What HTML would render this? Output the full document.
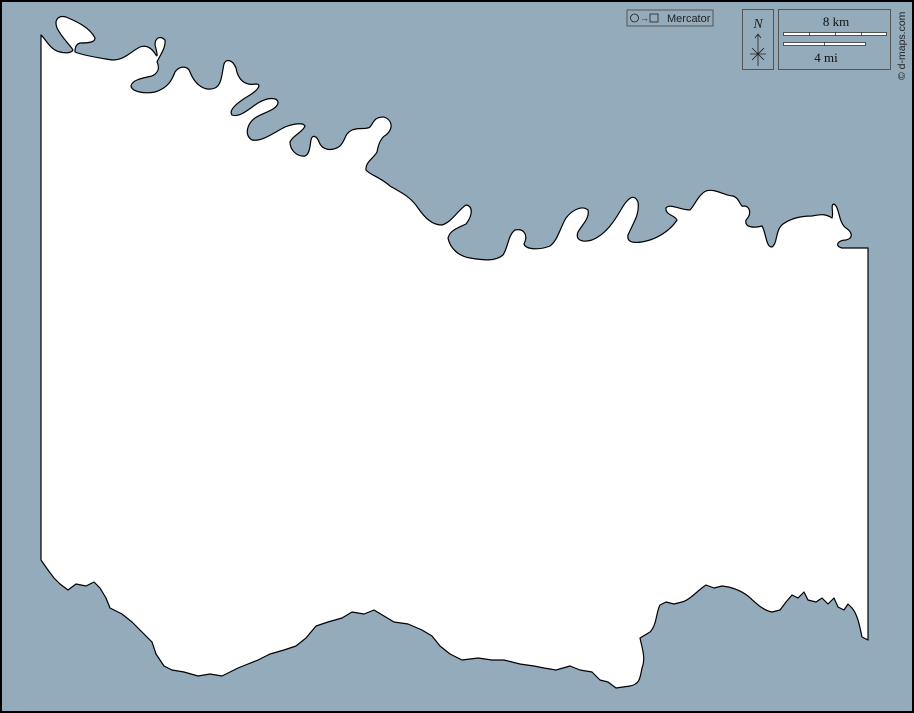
<!DOCTYPE html>
<html><head><meta charset="utf-8"><style>
html,body{margin:0;padding:0;}
body{width:914px;height:713px;overflow:hidden;background:#000;}
svg{display:block}
</style></head><body>
<svg width="914" height="713" viewBox="0 0 914 713" xmlns="http://www.w3.org/2000/svg">
<rect x="0" y="0" width="914" height="713" fill="#000"/>
<rect x="2" y="2" width="910" height="709" fill="#94abbb"/>
<path fill="#fff" stroke="#000" stroke-width="1.2" stroke-linejoin="round" d="M41,35 C45,38 50,50 60,52 C68,54 72,52 73,50 C70,45 62,38 57,28 C54,20 58,15 66,17 C78,22 90,28 95,38 C95,42 90,43 80,43 C76,44 75,48 75,52 C85,56 100,58 112,60 C125,60 130,52 140,47 C148,44 153,50 156,55 C158,58 157,52 155,45 C155,38 160,35 165,40 C166,48 160,55 157,62 C160,68 158,73 152,76 C142,78 132,80 131,86 C132,92 145,94 155,92 C168,88 172,80 175,72 C180,65 188,66 190,72 C195,85 205,92 215,88 C222,85 222,72 224,64 C226,58 233,60 236,68 C238,80 245,86 256,84 C262,84 258,90 250,95 C238,102 228,110 232,115 C240,118 250,108 258,103 C268,97 278,97 278,103 C277,110 262,113 255,118 C247,124 244,135 252,140 C262,142 275,132 285,127 C293,124 303,122 305,126 C303,132 292,136 290,142 C290,150 297,157 305,156 C310,154 310,145 311,140 C312,134 317,136 319,142 C322,150 332,152 340,146 C346,140 344,134 352,130 C360,127 366,130 370,127 C374,122 374,117 384,117 C392,120 394,128 386,135 C380,138 378,146 377,152 C374,158 365,162 366,170 C370,175 380,177 390,186 C400,192 410,196 418,208 C425,218 432,225 442,225 C452,222 458,210 466,205 C473,206 473,215 466,224 C458,228 450,230 448,238 C450,248 458,256 470,258 C482,260 495,262 503,255 C508,248 508,235 515,230 C525,228 528,236 524,244 C526,250 540,250 550,246 C558,240 560,228 566,218 C572,210 582,205 588,210 C590,218 582,225 578,232 C575,240 582,243 592,240 C605,235 614,222 622,208 C628,198 634,193 638,202 C640,215 632,225 628,235 C626,245 640,243 650,240 C662,236 672,228 677,220 C675,215 665,215 666,208 C670,203 680,210 690,210 C695,205 698,195 706,191 C715,188 725,196 733,196 C740,198 740,208 744,206 C750,206 752,214 746,220 C744,228 755,228 762,226 C766,232 766,248 772,247 C778,243 775,230 783,224 C790,219 800,216 812,216 C822,214 826,214 832,218 C834,212 830,205 834,204 C840,208 838,222 846,228 C852,232 854,238 846,240 C838,240 834,246 842,248 L868,248 L868,640 L862,637 C860,628 858,615 852,608 L848,604 L844,610 L838,607 L834,598 L828,604 L822,598 L816,602 L808,600 L804,592 L798,598 L792,595 L786,602 L780,610 L772,612 C762,610 755,602 748,596 C740,590 732,587 722,586 L714,588 L706,585 C698,590 690,600 682,602 L674,604 L666,602 L660,605 C656,612 657,625 650,632 L640,638 C642,648 646,658 642,668 C640,678 640,684 630,686 L616,688 L608,682 L600,680 L592,672 L580,670 L570,666 L556,670 L544,668 L534,666 L520,664 L504,660 L492,660 L478,658 L462,660 L450,654 L440,646 L432,636 L422,630 L408,624 L394,622 L384,616 L374,610 L364,614 L352,612 L342,618 L328,622 L316,626 L306,638 L296,646 L284,650 L270,654 L258,660 L248,664 L238,668 L230,672 L222,676 L210,674 L198,676 L184,672 L172,670 L164,666 L156,654 L152,642 L144,634 L132,622 L122,614 L110,608 L106,598 L100,588 L94,582 L86,586 L76,584 L68,590 L60,584 L54,578 L48,570 L41,560 Z"/>
<rect x="627" y="10" width="86" height="16" fill="#94abbb" stroke="#555" stroke-width="1"/>
<circle cx="634.5" cy="18" r="4" fill="none" stroke="#222" stroke-width="0.8"/>
<text x="640" y="21" font-family="Liberation Sans, sans-serif" font-size="9" fill="#222">→</text>
<rect x="650" y="14" width="8" height="8" fill="none" stroke="#222" stroke-width="0.8"/>
<text x="667" y="22" font-family="Liberation Sans, sans-serif" font-size="11" fill="#222">Mercator</text>
<rect x="742.5" y="9.5" width="31" height="60" fill="#94abbb" stroke="#555"/>
<text x="758" y="28" text-anchor="middle" font-family="Liberation Serif, serif" font-style="italic" font-size="14" fill="#222">N</text>
<path d="M758,35 L758,66 M755,38 L758,34 L761,38 M750,54 L766,54 M752,48 L764,60 M764,48 L752,60" stroke="#222" stroke-width="0.8" fill="none"/>
<rect x="778.5" y="9.5" width="112" height="60" fill="#94abbb" stroke="#555"/>
<text x="836" y="26" text-anchor="middle" font-family="Liberation Serif, serif" font-size="13" fill="#111">8 km</text>
<rect x="783.5" y="32.5" width="103" height="3" fill="#fff" stroke="#333" stroke-width="0.8"/>
<path d="M809.5,32 V36 M835.5,32 V36 M861.5,32 V36" stroke="#333" stroke-width="0.8"/>
<rect x="783.5" y="42.5" width="82" height="3" fill="#fff" stroke="#333" stroke-width="0.8"/>
<path d="M824.5,42 V46" stroke="#333" stroke-width="0.8"/>
<text x="826" y="62" text-anchor="middle" font-family="Liberation Serif, serif" font-size="13" fill="#111">4 mi</text>
<text transform="translate(905,80) rotate(-90)" font-family="Liberation Sans, sans-serif" font-size="10.5" fill="#222">© d-maps.com</text>
</svg>
</body></html>
